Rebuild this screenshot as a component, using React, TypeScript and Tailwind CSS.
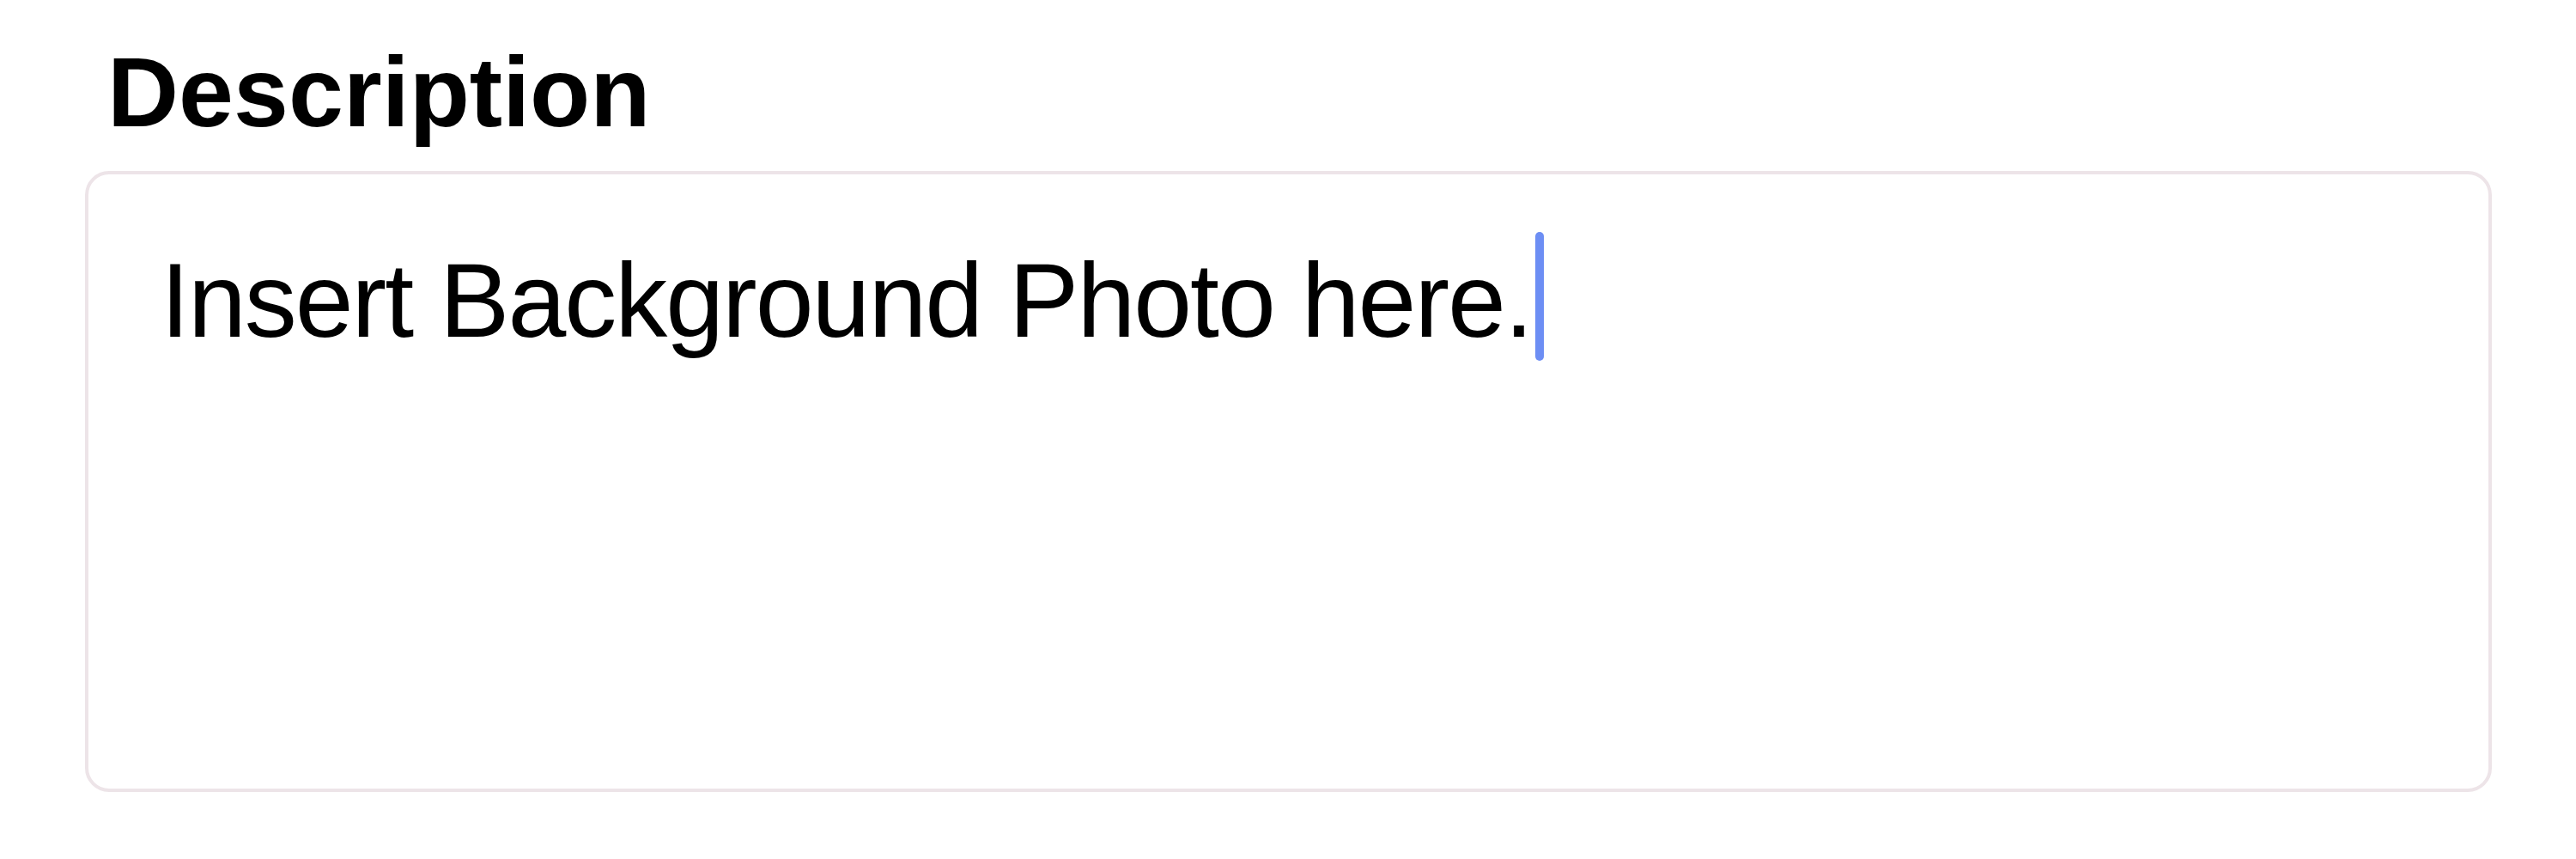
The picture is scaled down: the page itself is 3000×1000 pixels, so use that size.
export default function App() {
  return (
    <div className="min-h-screen bg-white font-['Liberation_Sans',Arial,sans-serif]">
      <div className="pl-[99px] pr-[98px] pt-[50px]">
        <h2 className="pl-[26px] text-[115px] font-bold leading-none text-black">Description</h2>
        <div className="mt-[34px] h-[723px] rounded-[28px] border-[4px] border-[#ede4e8] pl-[84px] pt-[67px]">
          <div className="flex items-start">
            <span className="mt-[19px] text-[122px] leading-none tracking-[-2px] text-black">Insert Background Photo here.</span>
            <span className="ml-[4px] h-[150px] w-[10px] rounded-full bg-[#6d8ef4]" />
          </div>
        </div>
      </div>
    </div>
  );
}
